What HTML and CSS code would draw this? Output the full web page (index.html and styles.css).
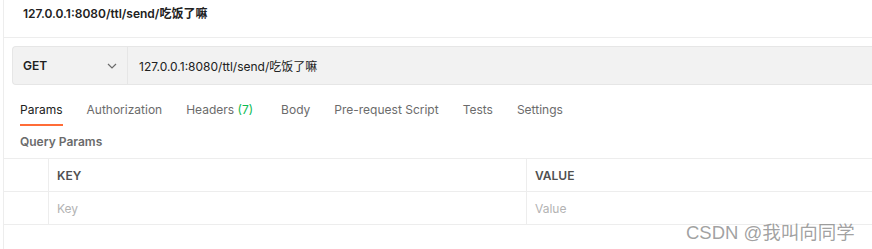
FILE: index.html
```html
<!DOCTYPE html>
<html lang="zh">
<head>
  <meta charset="UTF-8" />
  <title>127.0.0.1:8080/ttl/send/吃饭了嘛</title>
  <link rel="stylesheet" href="styles.css">
</head>
<body>
  <div class="pane">
    <div class="request-title">127.0.0.1:8080/ttl/send/吃饭了嘛</div>

    <div class="url-bar">
      <div class="method">
        <span>GET</span>
        <svg class="chevron" width="10" height="6" viewBox="0 0 10 6">
          <path d="M1 1 L5 5 L9 1" fill="none" stroke="#6b6b6b" stroke-width="1.2"/>
        </svg>
      </div>
      <div class="url">127.0.0.1:8080/ttl/send/吃饭了嘛</div>
    </div>

    <nav class="tabs">
      <span class="tab active">Params</span>
      <span class="tab">Authorization</span>
      <span class="tab headers">Headers <em class="count">(7)</em></span>
      <span class="tab">Body</span>
      <span class="tab">Pre-request Script</span>
      <span class="tab">Tests</span>
      <span class="tab">Settings</span>
    </nav>

    <div class="section-label">Query Params</div>

    <div class="params-table">
      <div class="row head">
        <div class="cell check"></div>
        <div class="cell key">KEY</div>
        <div class="cell value">VALUE</div>
      </div>
      <div class="row">
        <div class="cell check"></div>
        <div class="cell key placeholder">Key</div>
        <div class="cell value placeholder">Value</div>
      </div>
    </div>
  </div>

  <div class="watermark">CSDN @我叫向同学</div>
</body>
</html>
```

FILE: styles.css
```css
:root {
  --text-color: #212121;
  --muted: #6b6b6b;
  --line: #ededed;
  --bar-bg: #f2f2f2;
  --bar-border: #e6e6e6;
  --accent: #ff6c37;
  --green: #0cbb52;
}

body {
  margin: 0;
  background: #fff;
  font-family: 'Inter', 'Noto Sans CJK SC', sans-serif;
  color: var(--text-color);
  overflow: hidden;
}

.pane {
  margin-left: 3px;
  height: 249px;
  border-left: 1px solid var(--line);
}

.request-title {
  height: 37px;
  line-height: 27px;
  padding-left: 19px;
  font-size: 12px;
  font-weight: 600;
  border-bottom: 1px solid var(--line);
}

.url-bar {
  display: flex;
  height: 37px;
  margin: 8px 0 0 8px;
  background: var(--bar-bg);
  border: 1px solid var(--bar-border);
  border-right: none;
  border-radius: 4px 0 0 4px;
  font-size: 12px;
}

.method {
  width: 94px;
  padding: 0 10px;
  display: flex;
  align-items: center;
  justify-content: space-between;
  border-right: 1px solid var(--bar-border);
  font-weight: 600;
}

.url {
  display: flex;
  align-items: center;
  padding-left: 11px;
}

.tabs {
  display: flex;
  gap: 24px;
  margin-top: 1px;
  padding-left: 16px;
  height: 40px;
  font-size: 12px;
}

.tab {
  box-sizing: border-box;
  height: 40px;
  padding-top: 14px;
  line-height: 20px;
  color: var(--muted);
}

.tab.active {
  color: var(--text-color);
  border-bottom: 2px solid var(--accent);
}

.tab.headers {
  margin-right: 4px;
}

.count {
  font-style: normal;
  color: var(--green);
}

.section-label {
  padding-left: 16px;
  height: 32px;
  line-height: 32px;
  font-size: 12px;
  font-weight: 600;
  color: var(--muted);
}

.params-table {
  border-top: 1px solid var(--line);
}

.row {
  display: flex;
  height: 32px;
  border-bottom: 1px solid var(--line);
  font-size: 12px;
}

.cell {
  display: flex;
  align-items: center;
}

.cell.check {
  width: 44px;
  border-right: 1px solid var(--line);
}

.cell.key {
  width: 469px;
  padding-left: 8px;
  border-right: 1px solid var(--line);
}

.cell.value {
  flex: 1;
  padding-left: 8px;
}

.head .cell {
  font-weight: 600;
  color: #505050;
}

.placeholder {
  color: #b3b3b3;
}

.watermark {
  position: absolute;
  left: 686px;
  top: 218px;
  font-size: 18.5px;
  color: rgba(120, 120, 120, 0.7);
  font-family: 'Liberation Sans', 'Noto Sans CJK SC', sans-serif;
}
```
